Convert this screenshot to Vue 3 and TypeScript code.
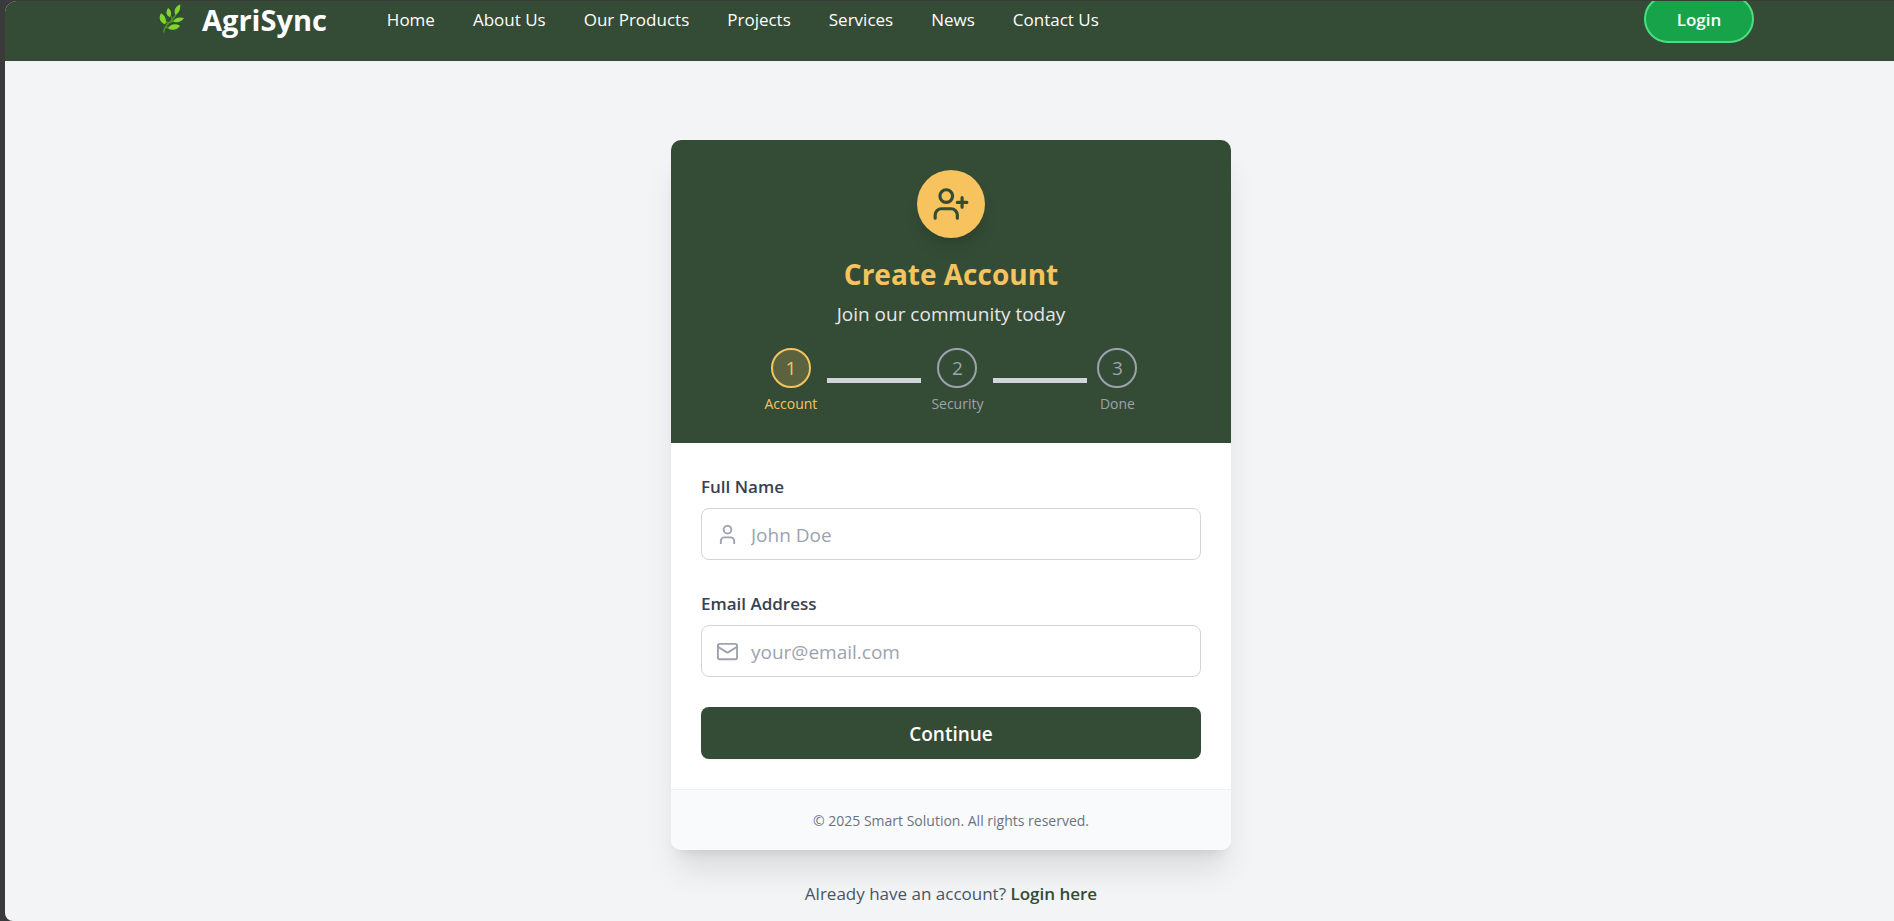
<script setup lang="ts">
import { ref } from 'vue'

interface Step {
  id: number
  label: string
}

const links: string[] = ['Home', 'About Us', 'Our Products', 'Projects', 'Services', 'News', 'Contact Us']
const steps: Step[] = [
  { id: 1, label: 'Account' },
  { id: 2, label: 'Security' },
  { id: 3, label: 'Done' },
]
const currentStep = ref(1)
const fullName = ref('')
const email = ref('')
</script>

<template>
  <div class="window">
    <div class="page">
      <header class="navbar">
        <a class="brand" href="#">
          <svg class="leaf" viewBox="0 0 26 30" aria-hidden="true">
            <path d="M5 28.500C5.500 22 9.500 20 13 16.500S18 11 20 6M6 24.500C9 23 13 24 18 24M11.500 18.500C15 16.500 18 16 21 15.500M10 20C7 18 5 16 4 13M14 15.500C12 12 11 10 10.500 7" fill="none" stroke="#4c9a1c" stroke-width="1.500" stroke-linecap="round" />
            <g fill="#80d62c">
              <path d="M6.500 20.500C1.500 19 -1 14 2 9C6 11 8.500 15.500 6.500 20.500Z" />
              <path d="M11 13C7 11 7 7 9.500 3.500C13 6 13.500 10 11 13Z" />
              <path d="M17 10.500C15 6 17 2 22 0C22.500 5 21 8.500 17 10.500Z" />
              <path d="M15 17.500C16.500 13.500 21 12.500 26 14C23.500 18 19 19.500 15 17.500Z" />
              <path d="M9.500 24.500C12 20 17 19.500 22 22C19 26.500 13.500 27.500 9.500 24.500Z" />
            </g>
          </svg>
          <span>AgriSync</span>
        </a>
        <nav class="links" aria-label="Main">
          <a v-for="link in links" :key="link" href="#">{{ link }}</a>
        </nav>
        <button class="login" type="button">Login</button>
      </header>

      <main class="content">
        <section class="card">
          <div class="card-head">
            <div class="avatar">
              <svg class="stroke-icon" viewBox="0 0 24 24" aria-hidden="true">
                <path d="M16 21v-2a4 4 0 0 0-4-4H6a4 4 0 0 0-4 4v2" />
                <circle cx="9" cy="7" r="4" />
                <path d="M19 8v6M22 11h-6" />
              </svg>
            </div>
            <h1>Create Account</h1>
            <p class="subtitle">Join our community today</p>
            <ol class="steps">
              <template v-for="(step, index) in steps" :key="step.id">
                <li v-if="index > 0" class="bar" aria-hidden="true"></li>
                <li class="step" :class="{ active: step.id === currentStep }">
                  <span class="number">{{ step.id }}</span>
                  <span class="step-label">{{ step.label }}</span>
                </li>
              </template>
            </ol>
          </div>

          <form class="form" @submit.prevent>
            <div class="field">
              <label for="full-name">Full Name</label>
              <div class="control">
                <svg class="stroke-icon" viewBox="0 0 24 24" aria-hidden="true">
                  <path d="M19 21v-2a4 4 0 0 0-4-4H9a4 4 0 0 0-4 4v2" />
                  <circle cx="12" cy="7" r="4" />
                </svg>
                <input id="full-name" v-model="fullName" type="text" placeholder="John Doe" />
              </div>
            </div>
            <div class="field">
              <label for="email">Email Address</label>
              <div class="control">
                <svg class="stroke-icon" viewBox="0 0 24 24" aria-hidden="true">
                  <rect x="2" y="4" width="20" height="16" rx="2" />
                  <path d="m22 7-8.970 5.700a1.940 1.940 0 0 1-2.060 0L2 7" />
                </svg>
                <input id="email" v-model="email" type="email" placeholder="your@email.com" />
              </div>
            </div>
            <button class="continue" type="submit">Continue</button>
          </form>

          <footer class="card-foot">© 2025 Smart Solution. All rights reserved.</footer>
        </section>
        <p class="signin">Already have an account? <a href="#">Login here</a></p>
      </main>
    </div>
  </div>
</template>

<style>
body {
  margin: 0;
  background: #3a3a3a;
}
</style>

<style scoped>
.window,
.window * {
  box-sizing: border-box;
}
.window {
  height: 100vh;
  padding: 1px 0 0 5px;
  overflow: hidden;
  background: #3a3a3a;
  font-family: "Open Sans", "Noto Sans", sans-serif;
}
.page {
  height: 100%;
  overflow: hidden;
  border-radius: 12px 0 0 8px;
  background: #f3f4f6;
}
a {
  color: inherit;
  text-decoration: none;
}
button,
input {
  font-family: inherit;
}
.navbar {
  display: flex;
  align-items: center;
  height: 84px;
  margin-top: -24px;
  padding: 0 140px 0 154px;
  background: #344b35;
  color: #fff;
}
.brand {
  display: flex;
  align-items: center;
  gap: 18px;
  font-size: 29px;
  font-weight: 700;
}
.leaf {
  width: 25px;
  height: 30px;
}
.links {
  display: flex;
  gap: 38px;
  margin-left: 60px;
  font-size: 17px;
}
.login {
  width: 110px;
  height: 48px;
  margin-left: auto;
  padding: 0;
  border: 2px solid #4ade80;
  border-radius: 24px;
  background: #16a34a;
  color: #fff;
  font-size: 17px;
  font-weight: 600;
}
.content {
  display: flex;
  flex-direction: column;
  align-items: center;
  padding: 79px 0 0 3px;
}
.card {
  width: 560px;
  max-width: 100%;
  overflow: hidden;
  border-radius: 10px;
  background: #fff;
  box-shadow: 0 25px 32px -6px rgba(0, 0, 0, 0.1), 0 10px 12px -8px rgba(0, 0, 0, 0.1);
}
.card-head {
  display: flex;
  flex-direction: column;
  align-items: center;
  height: 303px;
  padding-top: 30px;
  background: #344b35;
}
.stroke-icon {
  fill: none;
  stroke: currentColor;
  stroke-width: 2;
  stroke-linecap: round;
  stroke-linejoin: round;
}
.avatar {
  display: flex;
  align-items: center;
  justify-content: center;
  width: 68px;
  height: 68px;
  border-radius: 50%;
  background: #f7c35f;
  color: #344b35;
  box-shadow: 0 12px 18px -4px rgba(0, 0, 0, 0.1), 0 5px 8px -5px rgba(0, 0, 0, 0.1);
}
.avatar svg {
  width: 38px;
  height: 38px;
}
h1 {
  margin: 16px 0 0;
  color: #f7c35f;
  font-size: 28px;
  font-weight: 700;
  line-height: 40px;
}
.subtitle {
  margin: 6px 0 0;
  color: #e5e7eb;
  font-size: 19px;
  line-height: 28px;
}
.steps {
  display: flex;
  gap: 10px;
  margin: 20px 0 0;
  padding: 0;
  list-style: none;
}
.step {
  display: flex;
  flex-direction: column;
  align-items: center;
  gap: 6px;
  color: #9ca3af;
}
.number {
  display: flex;
  align-items: center;
  justify-content: center;
  width: 40px;
  height: 40px;
  border: 2px solid #9ca3af;
  border-radius: 50%;
  font-size: 19px;
}
.step-label {
  font-size: 14px;
  line-height: 20px;
}
.step.active {
  color: #f7c35f;
}
.active .number {
  border-color: #f7c35f;
  background: rgba(247, 195, 95, 0.2);
}
.bar {
  width: 94px;
  height: 5px;
  margin-top: 30px;
  background: #d1d5db;
}
.form {
  display: flex;
  flex-direction: column;
  gap: 30px;
  padding: 30px;
}
.field {
  display: flex;
  flex-direction: column;
  gap: 9px;
}
label {
  padding-top: 1px;
  color: #374151;
  font-size: 17px;
  font-weight: 600;
  line-height: 25px;
}
.control {
  display: flex;
  align-items: center;
  gap: 12px;
  height: 52px;
  padding: 0 14px;
  border: 1px solid #d1d5db;
  border-radius: 8px;
  color: #9ca3af;
}
.control svg {
  flex: none;
  width: 23px;
  height: 23px;
}
.control input {
  flex: 1;
  min-width: 0;
  padding: 2px 0 0;
  border: 0;
  outline: 0;
  background: transparent;
  color: #374151;
  font-size: 19px;
}
.control input::placeholder {
  color: #9ca3af;
  opacity: 1;
}
.continue {
  height: 52px;
  padding: 2px 0 0;
  border: 0;
  border-radius: 8px;
  background: #344b35;
  color: #fff;
  font-size: 19px;
  font-weight: 600;
  box-shadow: 0 1px 2px rgba(0, 0, 0, 0.05);
}
.card-foot {
  padding: 21px 30px 19px;
  border-top: 1px solid #f0f1f3;
  background: #f9fafb;
  color: #6b7280;
  font-size: 14px;
  line-height: 20px;
  text-align: center;
}
.signin {
  margin: 31px 0 0;
  color: #4b5563;
  font-size: 17px;
  line-height: 25px;
}
.signin a {
  color: #344b35;
  font-weight: 600;
}
</style>
